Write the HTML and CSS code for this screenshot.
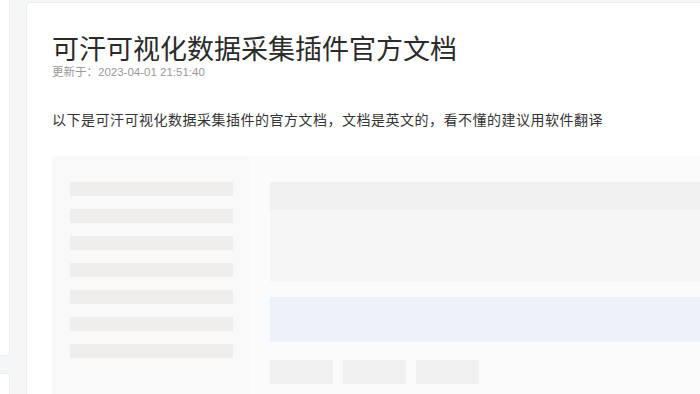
FILE: index.html
```html
<!DOCTYPE html>
<html lang="zh-CN">
<head>
<meta charset="utf-8">
<title>可汗可视化数据采集插件官方文档</title>
<link rel="stylesheet" href="styles.css">
</head>
<body>
<div class="page">
  <aside class="side">
    <div class="side-card side-card-top"></div>
    <div class="side-card side-card-bottom"></div>
  </aside>
  <main class="doc">
    <h1 class="title">可汗可视化数据采集插件官方文档</h1>
    <div class="meta">更新于：2023-04-01 21:51:40</div>
    <p class="intro">以下是可汗可视化数据采集插件的官方文档，文档是英文的，看不懂的建议用软件翻译</p>
    <div class="shot">
      <div class="shot-side">
        <div class="line"></div>
        <div class="line"></div>
        <div class="line"></div>
        <div class="line"></div>
        <div class="line"></div>
        <div class="line"></div>
        <div class="line"></div>
      </div>
      <div class="shot-main">
        <div class="head"></div>
        <div class="panel"></div>
        <div class="notice"></div>
        <div class="buttons">
          <div class="btn"></div>
          <div class="btn"></div>
          <div class="btn"></div>
        </div>
      </div>
    </div>
  </main>
</div>
</body>
</html>
```
FILE: styles.css
```css
html, body {
  margin: 0;
  padding: 0;
  height: 100%;
  overflow: hidden;
}
body {
  background: #f5f6f8;
  font-family: "Noto Sans CJK SC", "Noto Sans", sans-serif;
  color: #333;
}
.page {
  display: flex;
  gap: 16px;
  height: 394px;
}
.side {
  width: 10px;
  flex: none;
  display: flex;
  flex-direction: column;
  gap: 17px;
}
.side-card {
  background: #fff;
  border: 1px solid #eceef2;
  border-left: none;
}
.side-card-top {
  height: 355px;
  border-top: none;
  border-radius: 0 0 4px 0;
}
.side-card-bottom {
  flex: 1;
  border-bottom: none;
  border-radius: 0 4px 0 0;
}
.doc {
  flex: 1;
  margin-top: 2px;
  background: #fff;
  border: 1px solid #eceef2;
  border-right: none;
  border-bottom: none;
  border-radius: 4px 0 0 0;
  padding: 0 0 0 25px;
  overflow: hidden;
  min-width: 0;
}
.title {
  margin: 29px 0 0;
  font-size: 27px;
  font-weight: 400;
  line-height: 31px;
  color: #2b2b2b;
  white-space: nowrap;
}
.meta {
  margin-top: 1px;
  font-family: "Liberation Sans", "Noto Sans CJK SC", sans-serif;
  font-size: 11.5px;
  line-height: 16px;
  color: #999;
  white-space: nowrap;
}
.intro {
  margin: 28px 0 0;
  font-size: 14px;
  letter-spacing: 0.5px;
  line-height: 22px;
  color: #333;
  white-space: nowrap;
}
.shot {
  margin-top: 26px;
  display: flex;
  background: #fbfbfb;
  height: 260px;
  width: 700px;
}
.shot-side {
  width: 198px;
  flex: none;
  background: #f9f9f9;
  padding: 26px 0 0 18px;
  box-sizing: border-box;
  display: flex;
  flex-direction: column;
  gap: 13px;
}
.line {
  width: 163px;
  height: 14px;
  background: #f0eeed;
}
.shot-main {
  flex: 1;
  padding: 26px 0 0 20px;
  display: flex;
  flex-direction: column;
}
.head {
  height: 28px;
  background: #f0f0f0;
}
.panel {
  height: 72px;
  background: #f6f6f6;
}
.notice {
  margin-top: 15px;
  height: 45px;
  background: #edf1fa;
}
.buttons {
  margin-top: 18px;
  display: flex;
  gap: 10px;
}
.btn {
  width: 63px;
  height: 24px;
  background: #f0f0f0;
}
```
